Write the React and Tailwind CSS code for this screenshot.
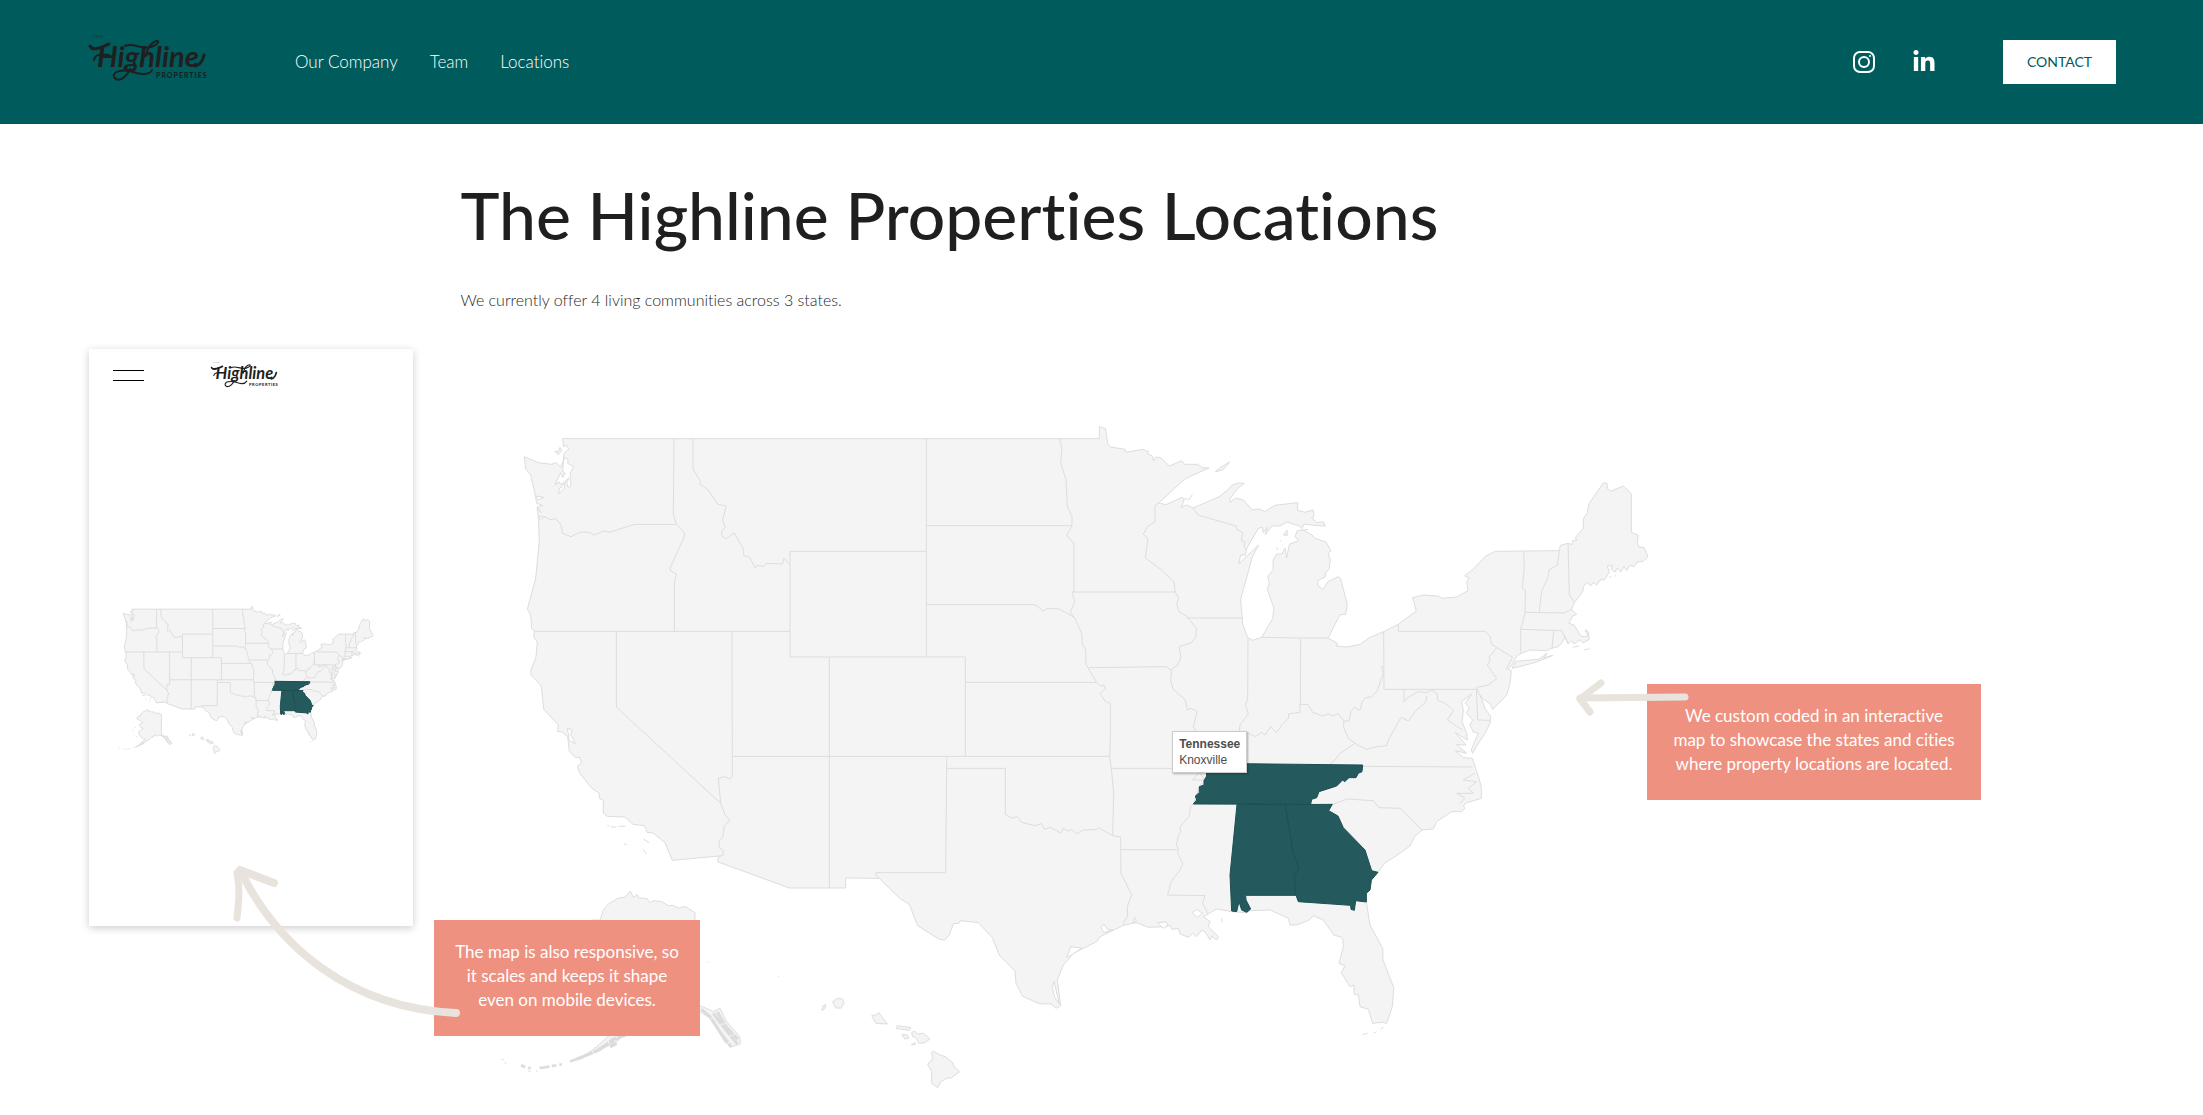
import { FaLinkedinIn } from "react-icons/fa"

const navLinks = ["Our Company", "Team", "Locations"]

const LAND =
  "M188 56H1798V20L1816 25L1824 74L1832 81L1875 88L1878 97L1927 88L1946 95L1942 101L1956 107L1961 123L1967 112H1981L2008 138L2046 122L2054 133H2093L2107 143L2127 144L2060 174L2040 190L1976 249L1998 254L2047 232L2052 240L2044 262L2060 255L2079 264L2158 230L2180 212L2196 196L2213 189L2233 190L2215 203L2190 236V248L2206 234L2230 240L2257 270L2277 267L2294 275L2325 256L2393 248V271L2415 277L2440 270L2442 290L2435 292L2450 308L2470 305L2476 318L2440 316L2412 312L2406 326L2398 318L2360 306L2340 318L2316 318L2295 345L2302 322L2290 338L2287 322L2275 325L2240 385L2236 405L2222 405L2216 432L2235 413L2250 400L2276 375L2257 410L2222 538L2228 612L2243 652L2258 661L2285 652L2318 595L2322 565L2302 508L2308 490L2303 470L2320 448L2319 420L2330 402L2345 402L2355 384L2360 414L2368 373L2396 362L2385 350L2392 332L2410 330L2436 345L2445 355L2478 366L2493 393L2484 400L2491 420L2487 448L2477 457L2475 472L2455 480L2453 495L2468 509L2485 484L2515 470L2522 476L2542 555L2537 583L2520 584L2484 654L2512 670L2510 678L2540 681L2581 673L2608 653L2651 635L2695 613L2749 573L2738 533L2770 525L2815 528L2825 535L2870 531L2904 512L2900 485L2908 474L2894 467L2920 448L2956 409L2986 394L3178 392L3181 376L3204 370L3216 374L3218 362L3230 362L3226 353L3250 325V297L3262 278L3267 251L3310 189L3321 190L3322 205L3332 214L3370 198L3394 221V337L3415 346L3412 368L3418 383L3432 382L3444 410L3430 423L3412 426L3402 440L3389 436L3380 452L3372 440L3362 456L3352 444L3345 456L3334 448L3336 436L3322 438L3328 455L3315 478L3300 480L3290 495L3280 488L3272 497L3262 488L3250 500L3248 515L3223 548L3215 568L3230 583L3218 588L3207 610L3222 615L3238 640L3246 650L3265 648L3255 630L3264 634L3268 658L3250 668L3238 660L3222 672L3215 662L3205 672L3195 650L3186 668L3175 680L3152 686L3140 692L3090 690L3065 700L3052 706L3038 732L3024 748L3034 752L3030 790L3020 825L2978 868L2970 850L2950 838L2940 825L2955 865L2972 890L2970 910L2955 940L2935 970L2918 1000L2914 990L2928 955L2935 940L2920 936L2910 915L2918 900L2900 880L2908 862L2896 850L2915 822L2885 845L2890 870L2886 905L2900 940L2902 960L2866 938L2898 975L2870 974L2900 1000L2866 992L2890 1013L2917 1015L2935 1070L2944 1100V1135L2900 1148L2890 1158L2895 1164L2885 1175L2855 1175L2810 1205L2800 1227L2766 1230L2743 1250L2730 1278L2685 1310L2655 1328L2634 1357L2614 1380L2610 1410L2599 1420V1445L2610 1515L2648 1585L2649 1620L2681 1702L2677 1760L2660 1810L2645 1807L2618 1810L2605 1768L2580 1760L2575 1725L2562 1722L2562 1695L2550 1700L2524 1658L2535 1638L2517 1630L2530 1580L2528 1556L2520 1550L2502 1546L2470 1500L2440 1487L2428 1500L2390 1515L2370 1515L2365 1495L2310 1470L2250 1472L2240 1478L2195 1475L2150 1467L2110 1490L2130 1505L2125 1520L2155 1550L2150 1560L2135 1548L2130 1560L2115 1535L2105 1530L2090 1550L2078 1540L2066 1552L2040 1542L2035 1525L2016 1528L2010 1516L1995 1520L1945 1522L1910 1508L1873 1515L1800 1550L1790 1565L1720 1600L1690 1635L1672 1680L1682 1757L1668 1765L1653 1752L1618 1751L1568 1729L1548 1690L1545 1653L1498 1606L1477 1553L1435 1508L1380 1502L1376 1510L1360 1511L1348 1545L1334 1561L1316 1557L1253 1517L1228 1453L1200 1436L1138 1375L1037 1374V1404H868L652 1325L657 1308L517 1321L495 1268L459 1239L441 1237L434 1217L399 1213L375 1191L322 1189L310 1180V1141L298 1135V1120L275 1104L238 1058L233 1039L244 1027L240 1013L225 1011L208 993L203 950L185 935H173L175 915L131 867L124 798L94 766L92 752L108 710L112 667L101 650L103 634L95 625L92 583L82 568L107 475L118 362L115 290L111 262L128 256L110 250L106 226L92 165L77 147L73 110L115 128L155 133L168 128L182 141L190 122L192 100L206 88L200 76L191 80Z"

const ISLANDS = [
  // Alaska
  "M391 1413L400 1432L412 1424L416 1434L440 1435L450 1448L462 1442L485 1445L505 1457L520 1456L535 1465L555 1459L585 1478L586 1755L608 1760L640 1775L660 1765L680 1805L719 1850L721 1872L690 1882L660 1840L630 1795L590 1768L560 1755L520 1770L490 1750L470 1790L455 1775L420 1820L385 1830L350 1865L300 1890L249 1912L290 1880L340 1835L375 1810L340 1805L300 1770L275 1720L300 1690L340 1670L298 1640L290 1612L340 1590L300 1560L253 1535L275 1500L300 1500L310 1470L325 1452L355 1434L375 1432Z",
  // Hawaii
  "M1300 1893L1320 1905L1336 1910L1358 1928L1362 1940L1379 1955L1355 1973L1338 1975L1322 1986L1313 2003L1295 1990V1955L1283 1933L1298 1915L1295 1897Z",
  "M1115 1787L1127 1785L1137 1778L1150 1797L1162 1812L1128 1810Z",
  "M1188 1825L1192 1817L1233 1823L1227 1831Z",
  "M1206 1843L1222 1845L1226 1855L1214 1857Z",
  "M1235 1838L1244 1833L1252 1842L1270 1840L1290 1857L1275 1868L1256 1870L1250 1855L1238 1850Z",
  "M1234 1874L1246 1868L1246 1874Z",
  "M998 1745L1012 1735L1028 1737L1032 1750L1022 1765L1006 1763Z",
  "M966 1772L968 1758L978 1754L974 1766Z",
  // Isle Royale and Long Island
  "M2146 155L2162 142L2189 126L2168 150Z",
  "M3036 745L3048 724L3090 720L3115 718L3142 700L3130 714L3158 706L3110 726L3066 738Z",
]

const BORDERS =
  "M522 56L520 283L529 313M115 290L135 290L150 299L168 296L183 315L188 340L213 350L242 336L270 337L281 345L312 333L327 337L405 313H529L548 332L555 345L510 445L512 453L529 462L523 490V634" +
  "M579 56V147L603 187L598 192L622 207L654 253L679 258L668 300L676 322L665 333L666 349L680 356L702 338L731 388V406L750 413L766 445L770 436L793 439L798 430L847 432L852 415L870 434" +
  "M1279 394H870V711H1396V1009M1279 56V711M103 634H870M349 634V861L662 1150M696 634L697 1068L690 1078L675 1070L655 1074L662 1150L675 1185L690 1202L673 1217L668 1252L657 1264L659 1283L670 1292L668 1307L657 1308" +
  "M988 711V1404M697 1009H1829M1396 787H1790M1340 1009V1045L1337 1358H1128V1366L1138 1375" +
  "M1340 1045H1516V1184L1535 1194L1552 1190L1565 1207L1605 1217L1625 1211L1634 1228L1650 1222L1670 1232L1683 1240L1690 1225L1707 1233L1715 1228L1729 1242L1750 1230L1790 1229L1795 1223L1838 1247L1862 1251L1863 1360L1895 1424L1882 1460L1883 1490L1870 1508L1873 1515" +
  "M1678 56L1686 85L1682 130L1698 178L1702 260L1716 288V318L1700 346L1722 370V516M1279 317H1716M1279 554H1605L1630 573L1642 565L1678 567L1722 592" +
  "M1716 516H2026M1716 516L1724 545L1711 577L1725 596L1745 640L1747 672L1757 690L1758 733L1790 787L1800 797L1813 797L1816 806L1801 821L1816 845L1831 850V960L1829 1009L1834 1045L1841 1120L1838 1247" +
  "M1767 743L1998 740L2015 752M1976 249L1965 256V305L1942 320L1930 343L1944 357L1936 414L1985 450L2022 486L2026 516L2036 535L2030 550L2037 575L2060 588L2089 625L2088 650L2075 668L2037 680L2043 712L2033 735L2015 748L2012 780L2019 807L2056 840L2062 870L2073 865L2092 874L2080 920L2098 945L2125 990L2110 1030L2098 1057L2115 1080L2098 1100L2090 1125L2080 1152L2072 1158L2067 1190L2040 1220L2042 1235L2034 1250L2033 1262L2028 1275L2035 1285L2033 1300L2042 1318L2048 1333L2036 1356L2020 1375L2010 1395L2008 1410L2002 1425L2115 1427L2108 1450L2123 1480" +
  "M1834 1045H2100M2115 1080H2078L2098 1057M1863 1289H2033M2060 594H2228M2079 264L2094 285L2208 318L2210 327L2228 338L2224 362L2235 365L2232 380L2240 390" +
  "M2244 655L2243 840L2236 852L2245 882L2220 915L2218 935L2245 940L2267 950L2284 937L2295 945L2312 920L2330 938L2345 915L2365 895L2366 882L2400 877V853L2423 853L2438 877L2468 888L2484 882L2500 888L2514 880L2532 903L2547 903L2553 875L2565 860L2573 870L2582 868L2585 848L2598 833L2615 830L2632 812L2650 760L2644 740L2651 740" +
  "M2402 656L2401 853M2285 652L2402 654H2484M2651 635L2652 808H2929M2695 613V634H2955L2970 648L2975 673L3038 712L3018 748M2990 684L2967 712L2970 722L2962 735L2990 776L2965 795L2930 802L2938 825" +
  "M3071 394L3073 440L3067 505L3076 510L3075 580L3062 628V700M3178 392L3172 435L3147 450L3145 470L3125 513L3118 575M3076 577L3192 579L3215 568M3204 370L3208 525L3223 548M3062 628L3185 632L3205 672M3161 632L3156 686" +
  "M2712 808V846L2725 832L2755 815L2780 818L2795 810L2812 822V840L2835 850L2850 862L2860 872L2842 900L2860 912L2888 930M2929 808L2933 900L2970 901" +
  "M2780 828L2778 845L2745 875L2725 903L2703 892L2665 960L2660 977L2630 980L2598 988L2565 970L2545 955L2530 920L2532 903M2565 970L2520 1000L2505 1020L2490 1032M2588 1039L2918 1041" +
  "M2498 1153L2542 1137L2620 1142L2637 1163L2702 1165L2766 1230M2925 1060L2890 1080L2930 1085L2905 1105L2920 1120L2870 1120L2895 1135L2880 1150"

const TEAL_STATES = [
  { name: "Tennessee", d: "M2118 1030L2588 1035L2586 1055L2575 1060L2568 1073L2547 1073L2534 1085L2528 1080L2510 1098L2457 1115L2450 1133L2435 1138L2432 1153L2080 1152L2090 1140L2086 1128L2098 1118L2098 1100L2112 1095L2112 1082L2120 1068Z" },
  { name: "Alabama", d: "M2211 1153L2356 1154L2380 1300L2397 1342L2384 1370L2385 1410L2388 1426H2237L2238 1440L2252 1467L2240 1477L2225 1470L2217 1445L2210 1475L2195 1473L2190 1365Z" },
  { name: "Georgia", d: "M2356 1154L2497 1153L2486 1172L2514 1188L2530 1223L2595 1290L2615 1352L2634 1357L2614 1380L2610 1410L2599 1420V1446L2567 1442L2563 1471L2553 1468L2552 1456L2395 1445L2388 1426L2385 1410L2384 1370L2397 1342L2380 1300Z" },
]

// inlets and bays that show white inside the coast line
const WATER =
  "M193 112L204 118L203 130L221 140L210 160L213 196L204 202L200 190L207 174L196 182L192 206L176 222L178 206L186 200L192 186L182 194L178 186L165 194L182 158L188 172L196 160L188 154L190 130ZM108 228L132 232L114 240ZM116 288L134 291L122 298ZM112 262L124 278L118 272ZM202 925L217 930L212 944L226 970L208 962ZM1662 1684L1678 1752L1664 1732L1657 1702ZM1803 1523L1812 1512L1822 1528L1838 1530L1812 1538ZM1904 1492L1909 1504L1898 1507ZM2076 1478L2090 1468L2108 1480L2092 1492ZM1972 1508L1998 1506L2004 1516L1990 1525ZM1700 1612L1707 1595L1712 1580L1745 1584L1716 1604Z"

// loose specks, chains and ragged shores
const DETAILS =
  "M164 93L174 96L180 82L186 92L174 104ZM322 1217L328 1219M333 1221H350M356 1219L376 1218M371 1271L381 1274M430 1257L447 1268M429 1288L440 1302M2052 238L2062 236M2064 242L2077 224M2350 345L2361 330L2362 346ZM2340 360L2342 364M2330 382L2332 390M2410 330L2424 328M3328 468L3334 474M3344 470L3348 466M3218 682L3236 678M3252 690L3268 686M2588 1844L2602 1840M2622 1838L2630 1836M2642 1828L2650 1822M2165 1495L2166 1508M622 1625L625 1627M834 1668L837 1670M5 1918L12 1920M14 1928L20 1930M64 1940L70 1942M84 1952L92 1954M108 1952L112 1954M230 1650L240 1655M240 1770L256 1780M195 1690L210 1698"

function UsMap({ label, className }) {
  return (
    <svg viewBox="0 0 3441 2010" role="img" aria-label={label} className={`block overflow-visible ${className}`}>
      <g fill="#f4f4f4" stroke="#dddddd" strokeLinejoin="round">
        <path d={LAND} vectorEffect="non-scaling-stroke" />
        {ISLANDS.map((d) => (
          <path key={d} d={d} vectorEffect="non-scaling-stroke" />
        ))}
        <path d={BORDERS} fill="none" vectorEffect="non-scaling-stroke" />
        <path d={WATER} fill="#ffffff" vectorEffect="non-scaling-stroke" />
        <path d={DETAILS} vectorEffect="non-scaling-stroke" />
      </g>
      {/* Aleutian chain and the Alaska panhandle */}
      <g fill="none" stroke="#dcdcdc">
        <path d="M63 1936L85 1944L130 1943L190 1932L249 1910L309 1880L369 1850" strokeWidth="8" strokeDasharray="14 9 8 26 30 7" />
        <path d="M230 1918L300 1888L340 1858L385 1842M330 1880L350 1870" strokeWidth="10" strokeDasharray="24 4" />
        <path d="M604 1768L630 1790L656 1830L680 1868M640 1780L664 1812L694 1850L712 1872M652 1776L680 1822L714 1858M636 1800L670 1850L694 1880" strokeWidth="9" strokeDasharray="40 3" />
      </g>
      <g fill="#245a5d" stroke="#1d4f53" strokeLinejoin="round">
        {TEAL_STATES.map((state) => (
          <path key={state.name} d={state.d} vectorEffect="non-scaling-stroke" />
        ))}
      </g>
    </svg>
  )
}

function Logo({ className }) {
  return (
    <svg viewBox="0 0 118 44" role="img" aria-label="The Highline Properties" className={`block overflow-visible ${className}`}>
      <g fill="#1f1f1f" fontFamily="Lato, sans-serif">
        <text x="4" y="0" fontSize="4" letterSpacing="1" opacity="0.7">THE</text>
        <text x="8" y="29" fontSize="29" fontWeight="700" fontStyle="italic">Highline</text>
        <text x="67" y="40" fontSize="7" fontWeight="900" letterSpacing="1">PROPERTIES</text>
      </g>
      <g fill="none" stroke="#1f1f1f" strokeLinecap="round">
        <path d="M1 8C4 14 12 9 20 6" strokeWidth="3" />
        <path d="M5 22C6 16 12 16 20 17" strokeWidth="2" />
        <path d="M36 8C44 4 52 12 62 9C71 6 71 1 65 4C61 6 58 12 57 18" strokeWidth="2" />
        <path d="M41 31C36 42 28 44 25 39C23 33 34 31 44 34C52 37 60 37 63 32" strokeWidth="2" />
        <path d="M106 28C111 27 114 22 115 17" strokeWidth="3" />
      </g>
    </svg>
  )
}

function InstagramIcon() {
  return (
    <svg viewBox="0 0 24 24" fill="none" stroke="#ffffff" strokeWidth="2" className="size-6">
      <rect x="2" y="2" width="20" height="20" rx="6" />
      <circle cx="12" cy="12" r="5" />
      <circle cx="18" cy="6" r="1" fill="#ffffff" stroke="none" />
    </svg>
  )
}

function Callout({ children, className }) {
  return (
    <p className={`bg-[#ee9180] pt-5 pb-6 text-center text-[17px] leading-6 text-white ${className}`}>
      {children}
    </p>
  )
}

function Header() {
  return (
    <header className="flex h-[124px] items-center bg-[#005b5d] pr-[87px] pl-[89px]">
      <a href="#home" className="mb-1">
        <Logo className="w-[118px]" />
      </a>
      <nav className="ml-[88px] flex gap-8 text-[17px] font-light text-white">
        {navLinks.map((link) => (
          <a key={link} href="#nav">
            {link}
          </a>
        ))}
      </nav>
      <div className="ml-auto flex items-center">
        <a href="#instagram" aria-label="Instagram">
          <InstagramIcon />
        </a>
        <a href="#linkedin" aria-label="LinkedIn" className="ml-9">
          <FaLinkedinIn className="size-6 text-white" />
        </a>
        <button type="button" className="ml-[67px] h-11 w-[113px] bg-white text-sm text-[#005b5d]">
          CONTACT
        </button>
      </div>
    </header>
  )
}

function PhonePreview() {
  return (
    <div className="h-[577px] w-[324px] shrink-0 bg-white shadow-[0_2px_8px_rgba(0,0,0,0.2)]">
      <div className="flex items-center px-6 pt-3.5">
        <button type="button" aria-label="Open menu" className="flex w-[31px] flex-col gap-[9px]">
          <span className="h-px w-full bg-black"></span>
          <span className="h-px w-full bg-black"></span>
        </button>
        <Logo className="ml-[67px] w-[67px]" />
      </div>
      <UsMap label="Map on a phone" className="mt-[217px] ml-[29px] w-[255px]" />
    </div>
  )
}

function App() {
  return (
    <div className="min-h-screen bg-white font-[Lato,sans-serif] [font-variant-ligatures:none]">
      <Header />

      <main className="pb-6">
        <div className="pl-[20.9%]">
          <h1 className="pt-[51px] text-[66px] leading-[80px] font-medium text-[#1f1f1f]">
            The Highline Properties Locations
          </h1>
          <p className="mt-[33px] text-base leading-6 font-light text-[#1f1f1f]">
            We currently offer 4 living communities across 3 states.
          </p>
        </div>

        <div className="mt-[37px] flex items-start px-[89px]">
          <PhonePreview />

          <div className="relative mt-[71px] ml-[87px] flex-1">
            <UsMap label="Locations in the United States" className="w-full" />

            {/* Tooltip over the hovered state */}
            <div className="absolute top-[46.4%] left-[58.6%] border border-[#cccccc] bg-white px-1.5 py-1 font-['Liberation_Sans',sans-serif] text-xs leading-4 text-[#4d4d4d] shadow-[1px_1px_2px_rgba(0,0,0,0.3)]">
              <strong className="block">Tennessee</strong>
              Knoxville
            </div>

            <div className="absolute top-[500px] -left-[66px] w-[266px]">
              <Callout className="px-4">
                The map is also responsive, so it scales and keeps it shape even on mobile devices.
              </Callout>
            </div>
            <svg viewBox="0 0 236 160" fill="none" stroke="#e8e4dd" strokeWidth="8" strokeLinecap="round" strokeLinejoin="round" className="absolute top-[440px] -left-[272px] w-[236px]">
              <path d="M14 14C50 85 120 148 228 153" />
              <path d="M46 23L12 10" />
              <path d="M9 13C12 28 11 40 9 58" strokeWidth="7" />
            </svg>
          </div>

          <aside className="relative mt-[335px] mr-[133px] w-[334px] shrink-0">
            <Callout className="px-6">
              We custom coded in an interactive map to showcase the states and cities where property locations are located.
            </Callout>
            <svg viewBox="0 0 120 44" fill="none" stroke="#e8e4dd" strokeWidth="7" strokeLinecap="round" strokeLinejoin="round" className="absolute -top-[9px] -left-[75px] w-[120px]">
              <path d="M8 23L113 22" />
              <path d="M29 8L8 24L18 37" />
            </svg>
          </aside>
        </div>
      </main>
    </div>
  )
}

export default App
